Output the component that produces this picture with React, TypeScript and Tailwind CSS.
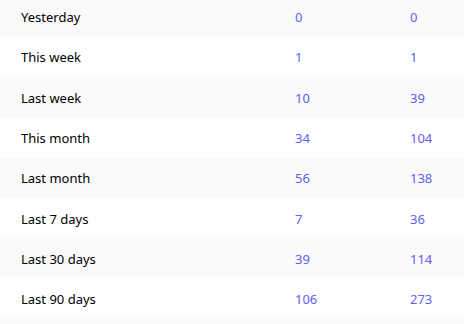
import React from "react";

const rows: [string, number, number][] = [
  ["Yesterday", 0, 0],
  ["This week", 1, 1],
  ["Last week", 10, 39],
  ["This month", 34, 104],
  ["Last month", 56, 138],
  ["Last 7 days", 7, 36],
  ["Last 30 days", 39, 114],
  ["Last 90 days", 106, 273],
];

export default function App() {
  return (
    <div className="w-[464px] h-[324px] overflow-hidden bg-white" style={{ fontFamily: '"Noto Sans", "Open Sans", sans-serif' }}>
      <div className="-mt-[3.33px]">
        {rows.map(([label, a, b], i) => (
          <div
            key={label}
            className={`flex items-center h-[40.33px] pt-[2px] text-[13px] ${i % 2 === 0 ? "bg-[#fafafa]" : "bg-white"}`}
          >
            <div className="pl-[21px] w-[295px] text-black">{label}</div>
            <div className="w-[115px] text-[#5f5ff2]">{a}</div>
            <div className="text-[#5f5ff2]">{b}</div>
          </div>
        ))}
        <div className="h-[40px] bg-[#fafafa]" />
      </div>
    </div>
  );
}
